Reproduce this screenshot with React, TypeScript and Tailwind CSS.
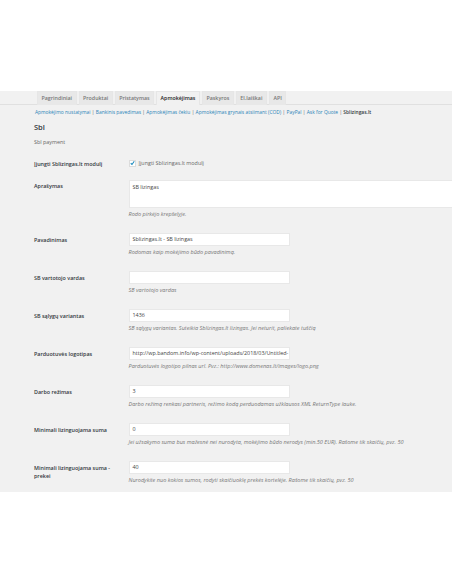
const tabs = ["Pagrindiniai", "Produktai", "Pristatymas", "Apmokėjimas", "Paskyros", "El.laiškai", "API"];

const links = [
  "Apmokėjimo nustatymai ",
  "Bankinis pavedimas ",
  "Apmokėjimas čekiu ",
  "Apmokėjimas grynais atsiimant (COD) ",
  "PayPal ",
  "Ask for Quote ",
];

const rows = [
  { label: "Pavadinimas", value: "Sblizingas.lt - SB lizingas", desc: "Rodomas kaip mokėjimo būdo pavadinimą." },
  { label: "SB vartotojo vardas", value: "", desc: "SB vartotojo vardas" },
  { label: "SB sąlygų variantas", value: "1436", desc: "SB sąlygų variantas. Suteikia Sblizingas.lt lizingas. Jei neturit, paliekate tuščią" },
  {
    label: "Parduotuvės logotipas",
    value: "http://wp.bandom.info/wp-content/uploads/2018/03/Untitled-",
    desc: "Parduotuvės logotipo pilnas url. Pvz.: http://www.domenas.lt/images/logo.png",
  },
  { label: "Darbo režimas", value: "3", desc: "Darbo režimą renkasi partneris, režimo kodą perduodamas užklausos XML ReturnType lauke." },
  { label: "Minimali lizinguojama suma", value: "0", desc: "Jei užsakymo suma bus mažesnė nei nurodyta, mokėjimo būdo nerodys (min.50 EUR). Rašome tik skaičių, pvz. 50" },
  { label: "Minimali lizinguojama suma - prekei", value: "40", desc: "Nurodykite nuo kokios sumos, rodyti skaičiuoklę prekės kortelėje. Rašome tik skaičių, pvz. 50" },
];

function Row({ label, value, desc }: { label: string; value: string; desc: string }) {
  return (
    <div className="flex h-[38px] shrink-0">
      <div className="w-[94.5px] shrink-0 pr-2 pt-[2.5px] text-[5.4px] leading-[8px] font-semibold text-[#32373c]">{label}</div>
      <div className="min-w-0 flex-1">
        <div className="h-[13px] w-[161px] overflow-hidden whitespace-nowrap border border-[#e8e8e8] bg-white pl-[3px] text-[5.4px] leading-[11px] text-[#444]">
          {value}
        </div>
        <div className="mt-[2px] whitespace-nowrap text-[5.55px] leading-[8px] text-[#777] italic">{desc}</div>
      </div>
    </div>
  );
}

export default function App() {
  return (
    <div className="h-[584px] w-[452px] overflow-hidden bg-white pt-[91px] font-['Open_Sans',sans-serif]">
      <div className="h-[401px] overflow-hidden bg-[#f1f1f1]">
        <div className="flex h-[13.5px] gap-[2px] border-b border-[#e0e0e0] pl-[37px]">
          {tabs.map((tab) => (
            <div
              key={tab}
              className={`h-[13.5px] whitespace-nowrap border border-b-0 border-[#e6e6e6] px-[3.5px] text-[5.3px] leading-[12px] font-semibold ${
                tab === "Apmokėjimas" ? "bg-[#f1f1f1] text-[#222]" : "bg-[#e8e8e8] text-[#777]"
              }`}
            >
              {tab}
            </div>
          ))}
        </div>
        <div className="mt-[3.5px] flex whitespace-pre pl-[35px] text-[4.9px] leading-[8px] text-[#2a84b8]">
          {links.map((link) => (
            <span key={link}>
              {link}
              <span className="text-[#666]">| </span>
            </span>
          ))}
          <span className="font-semibold text-[#32373c]">Sblizingas.lt</span>
        </div>
        <div className="flex flex-col pl-[34px]">
          <h2 className="mt-[6px] text-[7.5px] leading-[10px] font-semibold text-[#32373c]">Sbl</h2>
          <p className="mt-[5.5px] text-[5.4px] leading-[8px] text-[#666]">Sbl payment</p>

          <div className="mt-[13.5px] flex h-[17px] items-start">
            <div className="w-[94.5px] shrink-0 pt-[1px] text-[5.4px] leading-[8px] font-semibold text-[#32373c]">Įjungti Sblizingas.lt modulį</div>
            <div className="flex items-center gap-[3px]">
              <div className="flex h-[7px] w-[7px] items-center justify-center border border-[#dcdcdc] bg-white">
                <svg viewBox="0 0 10 10" className="h-[8px] w-[8px]">
                  <path d="M1.5 5.5 4 8 8.5 1.5" fill="none" stroke="#1e8cbe" strokeWidth="2.2" />
                </svg>
              </div>
              <span className="text-[5.4px] leading-[8px] text-[#666]">Įjungti Sblizingas.lt modulį</span>
            </div>
          </div>

          <div className="mt-[4px] flex h-[53px]">
            <div className="w-[94.5px] shrink-0 pt-[2px] text-[5.4px] leading-[8px] font-semibold text-[#32373c]">Aprašymas</div>
            <div className="min-w-0 flex-1">
              <div className="-mr-[4px] h-[28px] border border-[#e8e8e8] bg-white pl-[3px] pt-[2px] text-[5.4px] leading-[9px] text-[#444]">SB lizingas</div>
              <div className="mt-[2px] whitespace-nowrap text-[5.55px] leading-[8px] text-[#777] italic">Rodo pirkėjo krepšelyje.</div>
            </div>
          </div>

          {rows.map((row) => (
            <Row key={row.label} label={row.label} value={row.value} desc={row.desc} />
          ))}
        </div>
      </div>
    </div>
  );
}
